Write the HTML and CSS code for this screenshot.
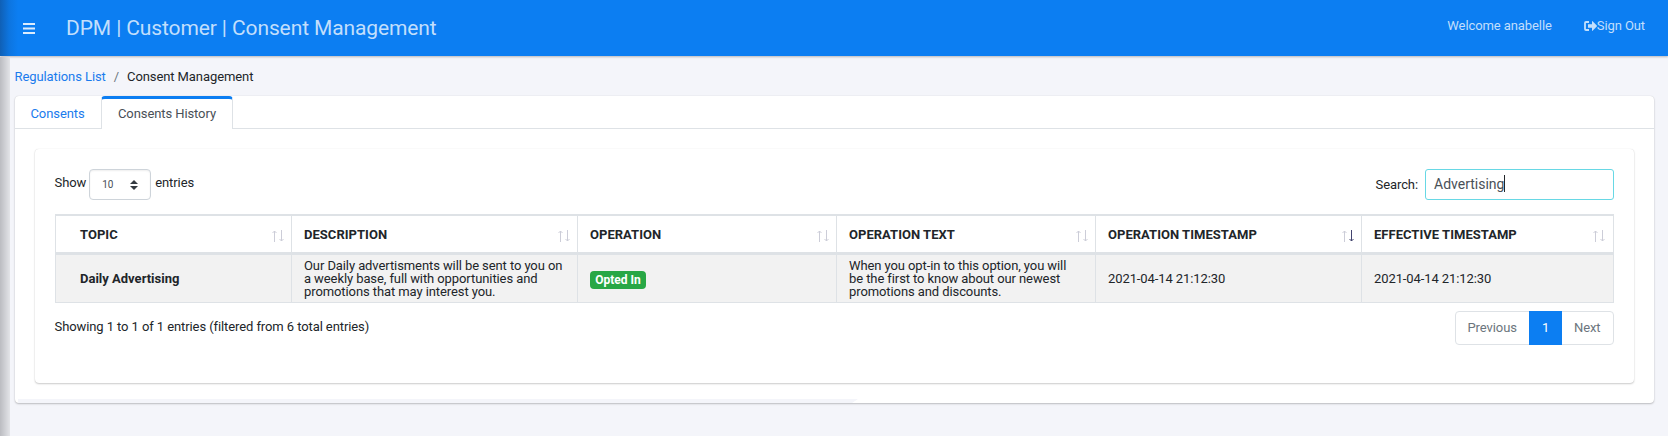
FILE: index.html
```html
<!DOCTYPE html>
<html lang="en">
<head>
<meta charset="utf-8">
<title>Consent Management</title>
<link rel="stylesheet" href="styles.css">
</head>
<body>
<svg width="0" height="0" class="defs">
  <symbol id="sort" viewBox="0 0 12 12"><path class="up" d="M2.5 12V1M.5 3l2-2 2 2"/><path class="down" d="M9.5 0v11M7.5 9l2 2 2-2"/></symbol>
</svg>
<header class="navbar">
  <svg class="menu" viewBox="0 0 12 11"><path d="M0 1h12M0 5.5h12M0 10h12"/></svg>
  <h1 class="brand"><span class="brand-text">DPM | Customer | Consent Management</span></h1>
  <span class="welcome">Welcome anabelle</span>
  <a class="signout"><svg viewBox="0 0 13 10"><path d="M5 1H2Q1 1 1 2v6q0 1 1 1h3" fill="none" stroke="currentColor" stroke-width="1.8"/><path d="M4 3.2h4V.4Q8-.2 8.6.2l4.2 4.3q.4.5 0 1L8.6 9.8Q8 10.2 8 9.6V6.8H4z" fill="currentColor"/></svg><span>Sign Out</span></a>
</header>
<main class="content">
  <nav class="breadcrumb"><a>Regulations List</a><i>/</i><span>Consent Management</span></nav>
  <section class="card">
    <div class="tabs"><a class="tab">Consents</a><a class="tab active">Consents History</a></div>
    <div class="panel">
      <div class="controls">
        <div class="length"><span>Show</span><span class="select"><span>10</span><svg viewBox="0 0 8 10"><path d="M4 0l4 4H0zM4 10l4-4H0z"/></svg></span><span>entries</span></div>
        <div class="search"><span>Search:</span><span class="input"><span>Advertising</span><b class="caret"></b></span></div>
      </div>
      <div class="table">
        <div class="row head">
          <div class="cell first"><span>TOPIC</span><svg class="sort"><use href="#sort"/></svg></div>
          <div class="cell"><span>DESCRIPTION</span><svg class="sort"><use href="#sort"/></svg></div>
          <div class="cell"><span>OPERATION</span><svg class="sort"><use href="#sort"/></svg></div>
          <div class="cell"><span>OPERATION TEXT</span><svg class="sort"><use href="#sort"/></svg></div>
          <div class="cell"><span>OPERATION TIMESTAMP</span><svg class="sort desc"><use href="#sort"/></svg></div>
          <div class="cell"><span>EFFECTIVE TIMESTAMP</span><svg class="sort"><use href="#sort"/></svg></div>
        </div>
        <div class="row data">
          <div class="cell first"><strong>Daily Advertising</strong></div>
          <div class="cell"><span>Our Daily advertisments will be sent to you on<br>a weekly base, full with opportunities and<br>promotions that may interest you.</span></div>
          <div class="cell"><span class="badge">Opted In</span></div>
          <div class="cell"><span>When you opt-in to this option, you will<br>be the first to know about our newest<br>promotions and discounts.</span></div>
          <div class="cell"><span>2021-04-14 21:12:30</span></div>
          <div class="cell"><span>2021-04-14 21:12:30</span></div>
        </div>
      </div>
      <div class="footer">
        <span class="info">Showing 1 to 1 of 1 entries (filtered from 6 total entries)</span>
        <div class="pages"><a class="prev">Previous</a><a class="current">1</a><a class="next">Next</a></div>
      </div>
    </div>
    <div class="strip"></div>
  </section>
</main>
<div class="edge-nav"></div>
<div class="edge"></div>
</body>
</html>
```
FILE: styles.css
```css
* { box-sizing: border-box; }
body { margin: 0; height: 436px; overflow: hidden; background: #f4f5fa; color: #212529; font: 13px/20px Roboto, sans-serif; letter-spacing: -.09px; position: relative; }
.defs { position: absolute; }
.navbar { height: 56px; background: #0c7ef2; box-shadow: 0 1px 2px rgba(0,0,0,.25); display: flex; align-items: center; color: #c2dffc; padding: 0 23px; }
.menu { width: 12px; height: 11px; stroke: #dcecfd; stroke-width: 1.8; }
.brand { margin: 0 auto 0 31px; font-size: 21px; line-height: 30px; font-weight: 400; letter-spacing: -.11px; }
.welcome { margin: -5px 32px 0 0; }
.signout { display: flex; align-items: center; margin-top: -5px; }
.signout svg { width: 13px; height: 10px; }
.content { padding: 0 14px 0 15px; }
.breadcrumb { height: 40px; padding-top: 11px; display: flex; margin-left: -.5px; }
.breadcrumb a { color: #1a7bed; }
.breadcrumb i { font-style: normal; color: #6c757d; margin: 0 8px; }
.card { height: 307px; background: #fff; border-radius: 4px; box-shadow: 0 0 1px rgba(0,0,0,.16), 0 1px 2px rgba(0,0,0,.22); display: flex; flex-direction: column; }
.tabs { height: 33px; border-bottom: 1px solid #dee2e6; display: flex; }
.tab { width: 86px; height: 33px; padding: 8px 0 0 15.5px; color: #1a7bed; }
.tab.active { width: 132px; padding: 5px 0 0 16px; color: #495057; background: #fff; border: 1px solid #dee2e6; border-top: 3px solid #0c7ef2; border-bottom: 0; border-radius: 4px 4px 0 0; }
.panel { margin: 20px 20px 0; height: 234px; padding: 20px 20px 0; border-radius: 4px; box-shadow: 0 0 1px rgba(0,0,0,.15), 0 1px 2px rgba(0,0,0,.2); }
.controls { height: 45px; display: flex; justify-content: space-between; align-items: flex-start; }
.length { display: flex; margin-left: -.5px; }
.length > span { margin-top: 4px; }
.length .select { margin: 0 4px 0 3px; width: 62px; height: 31px; border: 1px solid #ced4da; border-radius: 4px; box-shadow: inset 0 1px 2px rgba(0,0,0,.07); display: flex; align-items: center; justify-content: space-between; padding: 0 12px; font-size: 10px; color: #495057; }
.select svg { width: 8px; height: 10px; fill: #343a40; }
.search { display: flex; align-items: center; gap: 7px; }
.input { width: 189px; height: 31px; border: 1px solid #67d8e5; border-radius: 3px; padding: 0 0 2px 8px; display: flex; align-items: center; font-size: 14px; color: #495057; letter-spacing: 0; }
.caret { width: 1px; height: 17px; background: #212529; }
.table { border: 1px solid #dee2e6; border-top-width: 2px; }
.row { display: grid; grid-template-columns: 236px 286px 259px 259px 266px 1fr; }
.head { height: 39px; border-bottom: 3px solid #dee2e6; font-weight: 700; letter-spacing: .03px; }
.head span { padding-top: 2px; }
.data { height: 47px; background: #f2f2f2; line-height: 13px; }
.data strong { letter-spacing: 0; }
.cell { display: flex; align-items: center; justify-content: space-between; padding: 0 7px 0 12px; border-right: 1px solid #dee2e6; white-space: nowrap; }
.cell:last-child { border-right: 0; padding-right: 8px; }
.cell.first { padding-left: 24px; }
.sort { width: 12px; height: 12px; margin-top: 3px; fill: none; stroke: #cccdd8; stroke-width: 1; }
.desc { --down: #42446f; }
.down { stroke: var(--down, #cccdd8); }
.badge { background: #28a745; color: #fff; border-radius: 4px; font-weight: 700; font-size: 12px; width: 56px; height: 18px; line-height: 18px; text-align: center; margin-top: 2px; letter-spacing: 0; }
.footer { display: flex; justify-content: space-between; padding-top: 8px; }
.info { margin: 6px 0 0 -.5px; }
.pages { display: flex; width: 159px; height: 34px; border: 1px solid #dee2e6; border-radius: 4px; color: #6c757d; line-height: 32px; }
.prev { width: 73px; padding-left: 11.5px; }
.current { width: 33px; margin: -1px 0; line-height: 34px; background: #0c7ef2; color: #fff; text-align: center; }
.next { padding-left: 12px; }
.strip { width: 840px; height: 4px; margin: auto 0 0 3px; background: #f4f5fa; clip-path: polygon(0 0, 100% 0, calc(100% - 6px) 100%, 0 100%); }
.edge-nav { position: absolute; left: 0; top: 0; width: 18px; height: 56px; background: linear-gradient(90deg, rgba(20,50,90,.4), rgba(20,50,90,.12) 50%, transparent); }
.edge { position: absolute; left: 0; top: 57px; width: 10px; height: 379px; background: linear-gradient(90deg, #bbbcc1, #e3e4e8); }
```
